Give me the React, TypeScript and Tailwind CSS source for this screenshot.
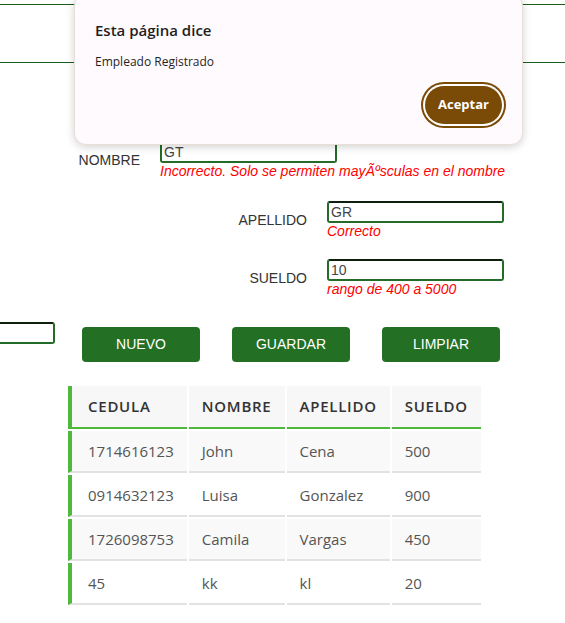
import React from 'react';

type Row = {
  offset: string;
  label: string;
  value: string;
  msg: string;
  gap: string;
};

const rows: Row[] = [
  { offset: 'ml-[20px]', label: 'NOMBRE', value: 'GT', msg: 'Incorrecto. Solo se permiten mayÃºsculas en el nombre', gap: 'mt-[78px]' },
  { offset: 'ml-[187px]', label: 'APELLIDO', value: 'GR', msg: 'Correcto', gap: 'mt-[22px]' },
  { offset: 'ml-[187px]', label: 'SUELDO', value: '10', msg: 'rango de 400 a 5000', gap: 'mt-[20px]' },
];

const empleados = [
  ['1714616123', 'John', 'Cena', '500'],
  ['0914632123', 'Luisa', 'Gonzalez', '900'],
  ['1726098753', 'Camila', 'Vargas', '450'],
  ['45', 'kk', 'kl', '20'],
];

const inputCls =
  'w-[177px] h-[22px] border-2 border-[#236b26] border-t-[#0c200d] rounded-[3px] px-[2px] text-[14px] leading-4 text-[#444] bg-white outline-none';

function FormRow({ row }: { row: Row }) {
  return (
    <div className={`flex items-center ${row.offset} ${row.gap}`}>
      <label className="w-[120px] shrink-0 text-right text-[14px] text-[#333]">{row.label}</label>
      <div className="ml-5 flex flex-col">
        <input className={inputCls} defaultValue={row.value} readOnly />
        <span className="text-[14px] leading-4 italic text-[#ff0000] whitespace-nowrap">{row.msg}</span>
      </div>
    </div>
  );
}

export default function App() {
  return (
    <div className="relative w-full min-h-[623px] overflow-hidden bg-white font-['Liberation_Sans',Arial,sans-serif]">
      {/* Header bar */}
      <div className="mt-1 h-[59px] border-y border-[#1b5e20]" />

      {/* Formulario */}
      {rows.map((r) => (
        <FormRow key={r.label} row={r} />
      ))}

      {/* Cedula (fuera de pantalla) + botones */}
      <div className="mt-[24px] flex items-start">
        <div className="ml-[-122px] shrink-0">
          <input className={inputCls} defaultValue="" readOnly />
        </div>
        <div className="ml-[27px] mt-[6px] flex gap-8">
          {['NUEVO', 'GUARDAR', 'LIMPIAR'].map((b) => (
            <button
              key={b}
              className="w-[118px] h-[35px] rounded-[4px] bg-[#237025] text-white text-[14px]"
            >
              {b}
            </button>
          ))}
        </div>
      </div>

      {/* Tabla */}
      <table className="mt-[22px] ml-[66px] border-separate border-spacing-[2px] font-['Open_Sans',sans-serif] text-[15px]">
        <thead>
          <tr>
            {['CEDULA', 'NOMBRE', 'APELLIDO', 'SUELDO'].map((h, i) => (
              <th
                key={h}
                className={`bg-[#f7f7f7] border-b-2 border-[#50b83c] py-[10px] leading-[21px] pr-[13px] text-left font-semibold tracking-[0.75px] text-[#333] ${
                  i === 0 ? 'border-l-4 pl-4' : 'pl-[13px]'
                }`}
              >
                {h}
              </th>
            ))}
          </tr>
        </thead>
        <tbody>
          {empleados.map((e, r) => (
            <tr key={r} className={r % 2 === 0 ? 'bg-[#f9f9f9]' : 'bg-white'}>
              {e.map((c, i) => (
                <td
                  key={i}
                  className={`border-b-2 border-[#e2e2e2] py-[10px] leading-5 pr-[13px] text-[#555] ${
                    i === 0 ? 'border-l-4 border-l-[#50b83c] pl-4' : 'pl-[13px]'
                  }`}
                >
                  {c}
                </td>
              ))}
            </tr>
          ))}
        </tbody>
      </table>

      {/* Alerta del navegador */}
      <div className="absolute left-[74px] top-[-6px] z-10 w-[449px] h-[151px] rounded-xl border border-[#eadfd6] bg-[#fffafd] shadow-[0_2px_8px_rgba(0,0,0,0.18)] font-['Open_Sans',sans-serif]">
        <div className="pl-[20px] pt-[25px] text-[15px] font-semibold leading-5 text-[#1f1f1f]">Esta página dice</div>
        <div className="pl-[20px] pt-[14px] text-[12px] leading-4 text-[#1f1f1f]">Empleado Registrado</div>
        <div className="mt-[16px] flex justify-end pr-[20px]">
          <button className="w-[77px] h-[38px] rounded-full bg-[#7a4a07] text-white text-[13px] font-bold shadow-[0_0_0_2px_#ffffff,0_0_0_4px_#7a4a07]">
            Aceptar
          </button>
        </div>
      </div>
    </div>
  );
}
